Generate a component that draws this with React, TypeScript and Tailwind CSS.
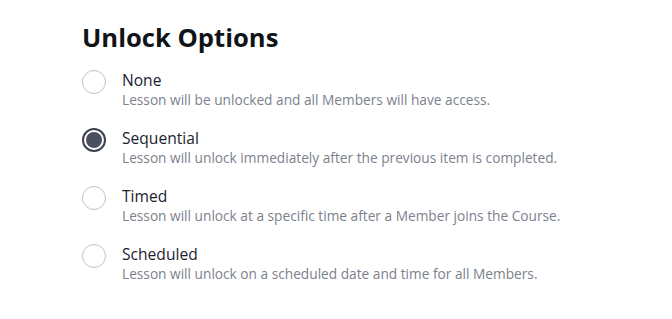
const options = [
  { id: 'none', label: 'None', desc: 'Lesson will be unlocked and all Members will have access.' },
  { id: 'sequential', label: 'Sequential', desc: 'Lesson will unlock immediately after the previous item is completed.' },
  { id: 'timed', label: 'Timed', desc: 'Lesson will unlock at a specific time after a Member joins the Course.' },
  { id: 'scheduled', label: 'Scheduled', desc: 'Lesson will unlock on a scheduled date and time for all Members.' },
];

function Radio({ checked }: { checked: boolean }) {
  if (checked) {
    return (
      <span className="flex h-6 w-6 shrink-0 items-center justify-center rounded-full border-2 border-[#3b4150] bg-white">
        <span className="block h-4 w-4 rounded-full bg-[#4b5060]" />
      </span>
    );
  }
  return <span className="block h-6 w-6 shrink-0 rounded-full border border-[#bfc3ca] bg-white" />;
}

export default function App() {
  return (
    <div className="min-h-[319px] w-full bg-white pl-[82px] pt-[20px] font-['Open_Sans',sans-serif]">
      <h2 className="text-[25.6px] font-bold leading-[36px] text-[#101418]">Unlock Options</h2>
      <div className="mt-[14px] flex flex-col gap-[19px]">
        {options.map((o) => (
          <label key={o.id} className="flex items-start gap-4">
            <span className="block shrink-0">
              <Radio checked={o.id === 'sequential'} />
            </span>
            <span className="flex flex-col">
              <span className="text-[15.6px] leading-[20px] text-[#1c2230]">{o.label}</span>
              <span className="text-[13.7px] leading-[19px] text-[#7c818d]">{o.desc}</span>
            </span>
          </label>
        ))}
      </div>
    </div>
  );
}
